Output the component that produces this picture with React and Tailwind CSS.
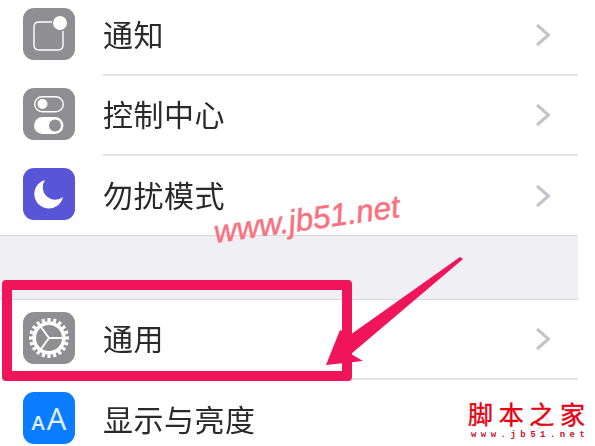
import React from "react";

const sans = "font-['Noto_Sans_CJK_SC','Noto_Sans',sans-serif]";

function Chevron() {
  return (
    <svg width="16" height="24" viewBox="0 0 16 24" fill="none" className="shrink-0 blur-[0.4px]">
      <path d="M2 2 L13.5 12 L2 22" stroke="#c4c4c8" strokeWidth="3" />
    </svg>
  );
}

function NotifyIcon() {
  return (
    <svg width="52" height="52" viewBox="0 0 52 52" fill="none">
      <path d="M29 14 H16 Q11 14 11 19 V37 Q11 42 16 42 H35 Q40 42 40 37 V23" stroke="#fff" strokeWidth="1.4" />
      <circle cx="37" cy="15" r="7" fill="#fff" />
    </svg>
  );
}

function ControlIcon() {
  return (
    <svg width="52" height="52" viewBox="0 0 52 52" fill="none">
      <rect x="11.7" y="8.7" width="28.6" height="15" rx="7.5" stroke="#fff" strokeWidth="1.4" />
      <circle cx="19.5" cy="16" r="5" fill="#fff" />
      <rect x="11" y="29" width="29.5" height="17" rx="8.5" fill="#fff" />
      <circle cx="32" cy="37.5" r="6" fill="#8e8e93" />
    </svg>
  );
}

function MoonIcon() {
  return (
    <svg width="52" height="52" viewBox="0 0 52 52">
      <path d="M22 12 A14.5 14.5 0 1 0 40 29 A12.5 12.5 0 0 1 22 12 Z" fill="#fff" />
    </svg>
  );
}

function GearIcon() {
  const teeth = Array.from({ length: 20 }, (_, i) => i * 18);
  return (
    <svg width="52" height="52" viewBox="0 0 52 52" fill="none">
      {teeth.map((a) => (
        <rect key={a} x="24.4" y="6" width="3.2" height="6" fill="#fff" transform={`rotate(${a} 26 26)`} />
      ))}
      <circle cx="26" cy="26" r="14.8" stroke="#fff" strokeWidth="3.6" />
      <path d="M26 26 L18 15 M26 26 L18 37 M26 26 H40" stroke="#fff" strokeWidth="2" />
    </svg>
  );
}

function Row({ icon, bg, label, last }) {
  return (
    <div className="flex h-[80px] w-[578px] shrink-0 items-center pl-[23px]">
      <div className={`mb-[4px] flex h-[52px] w-[52px] shrink-0 items-center justify-center rounded-[11px] ${bg}`}>{icon}</div>
      <div className={`ml-[28px] flex h-full flex-1 items-center justify-between pr-[27px] ${last ? "" : "border-b-2 border-[#e4e4e6]"}`}>
        <span className={`${sans} mb-[4px] text-[30px] leading-none tracking-[0.5px] text-[#2a2a2a] blur-[0.4px]`}>{label}</span>
        <Chevron />
      </div>
    </div>
  );
}

export default function App() {
  return (
    <div className="relative h-[446px] w-[595px] overflow-hidden bg-white">
      <div className="-mt-[4px] flex flex-col">
        <Row icon={<NotifyIcon />} bg="bg-[#8e8e93]" label="通知" />
        <Row icon={<ControlIcon />} bg="bg-[#8e8e93]" label="控制中心" />
        <Row icon={<MoonIcon />} bg="bg-[#5856d6]" label="勿扰模式" last />
        <div className="-mt-[1px] h-[65px] w-[578px] shrink-0 border-y border-[#d8d8dc] bg-[#efeff4]" />
        <Row icon={<GearIcon />} bg="bg-[#8e8e93]" label="通用" />
        <Row
          icon={<span className="font-['Open_Sans',sans-serif] text-[31px] leading-none text-[#e4f0ff]"><span className="mr-[2px] text-[20px] font-semibold">A</span>A</span>}
          bg="bg-[#0a7cff]"
          label="显示与亮度"
          last
        />
      </div>

      {/* red highlight box */}
      <div className="absolute left-[2px] top-[280px] h-[101px] w-[350px] rounded-[4px] border-[10px] border-[#f0145a]" />

      {/* arrow */}
      <svg className="absolute inset-0" width="595" height="446" viewBox="0 0 595 446">
        <polygon points="326,365 340,330 350,335 460,257 463,259 351,354 363,361" fill="#f0145a" />
      </svg>

      {/* watermark */}
      <div className="absolute left-[214px] top-[217px] origin-left -rotate-[8deg] whitespace-nowrap font-['Liberation_Sans',sans-serif] text-[31.5px] italic leading-none text-[#f9717f] [-webkit-text-stroke:0.5px_#f9717f]">
        www.jb51.net
      </div>

      {/* site logo */}
      <div className="absolute left-[468px] top-[398px] w-[117px] bg-white/70 text-[#e60012]">
        <div className={`${sans} flex justify-between text-[25px] leading-[31px] [-webkit-text-stroke:0.4px_#e60012]`}>
          <span>脚</span><span>本</span><span>之</span><span>家</span>
        </div>
        <div className="mt-[2px] flex justify-between pl-[3px] font-['Liberation_Mono',monospace] text-[9px] font-bold leading-[9px] text-[#c8102e]">
          {"www.jb51.net".split("").map((c, i) => <span key={i}>{c}</span>)}
        </div>
      </div>
    </div>
  );
}
